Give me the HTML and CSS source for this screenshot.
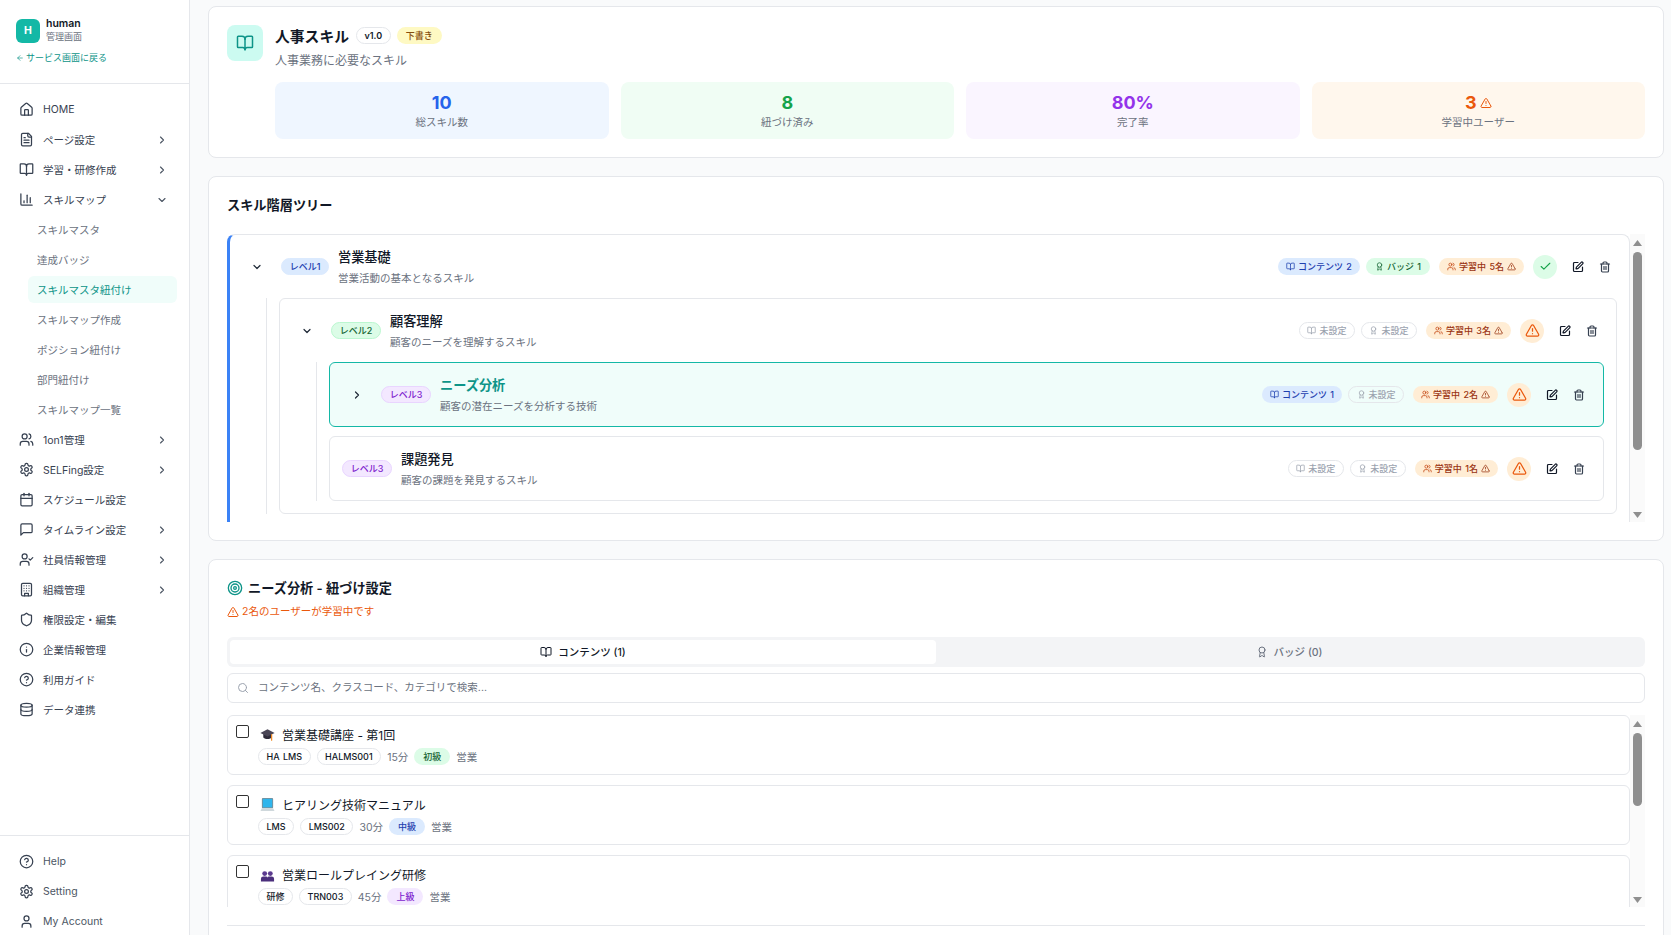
FILE: index.html
```html
<!DOCTYPE html>
<html lang="ja">
<head>
  <meta charset="UTF-8" />
  <title>スキルマスタ紐付け</title>
  <link rel="stylesheet" href="styles.css">
</head>
<body>
  <svg class="sprite" xmlns="http://www.w3.org/2000/svg">
    <symbol id="i-home" viewBox="0 0 24 24"><path d="M15 21v-8a1 1 0 0 0-1-1h-4a1 1 0 0 0-1 1v8"/><path d="M3 10a2 2 0 0 1 .709-1.528l7-5.999a2 2 0 0 1 2.582 0l7 5.999A2 2 0 0 1 21 10v9a2 2 0 0 1-2 2H5a2 2 0 0 1-2-2z"/></symbol>
    <symbol id="i-file" viewBox="0 0 24 24"><path d="M15 2H6a2 2 0 0 0-2 2v16a2 2 0 0 0 2 2h12a2 2 0 0 0 2-2V7Z"/><path d="M14 2v4a2 2 0 0 0 2 2h4"/><path d="M10 9H8"/><path d="M16 13H8"/><path d="M16 17H8"/></symbol>
    <symbol id="i-book" viewBox="0 0 24 24"><path d="M12 7v14"/><path d="M3 18a1 1 0 0 1-1-1V4a1 1 0 0 1 1-1h5a4 4 0 0 1 4 4 4 4 0 0 1 4-4h5a1 1 0 0 1 1 1v13a1 1 0 0 1-1 1h-6a3 3 0 0 0-3 3 3 3 0 0 0-3-3z"/></symbol>
    <symbol id="i-chart" viewBox="0 0 24 24"><path d="M3 3v16a2 2 0 0 0 2 2h16"/><path d="M18 17V9"/><path d="M13 17V5"/><path d="M8 17v-3"/></symbol>
    <symbol id="i-users" viewBox="0 0 24 24"><path d="M16 21v-2a4 4 0 0 0-4-4H6a4 4 0 0 0-4 4v2"/><path d="M16 3.128a4 4 0 0 1 0 7.744"/><path d="M22 21v-2a4 4 0 0 0-3-3.87"/><circle cx="9" cy="7" r="4"/></symbol>
    <symbol id="i-gear" viewBox="0 0 24 24"><path d="M12.22 2h-.44a2 2 0 0 0-2 2v.18a2 2 0 0 1-1 1.73l-.43.25a2 2 0 0 1-2 0l-.15-.08a2 2 0 0 0-2.73.73l-.22.38a2 2 0 0 0 .73 2.73l.15.1a2 2 0 0 1 1 1.72v.51a2 2 0 0 1-1 1.74l-.15.09a2 2 0 0 0-.73 2.73l.22.38a2 2 0 0 0 2.73.73l.15-.08a2 2 0 0 1 2 0l.43.25a2 2 0 0 1 1 1.73V20a2 2 0 0 0 2 2h.44a2 2 0 0 0 2-2v-.18a2 2 0 0 1 1-1.73l.43-.25a2 2 0 0 1 2 0l.15.08a2 2 0 0 0 2.73-.73l.22-.39a2 2 0 0 0-.73-2.73l-.15-.08a2 2 0 0 1-1-1.74v-.5a2 2 0 0 1 1-1.74l.15-.09a2 2 0 0 0 .73-2.73l-.22-.38a2 2 0 0 0-2.73-.73l-.15.08a2 2 0 0 1-2 0l-.43-.25a2 2 0 0 1-1-1.73V4a2 2 0 0 0-2-2z"/><circle cx="12" cy="12" r="3"/></symbol>
    <symbol id="i-calendar" viewBox="0 0 24 24"><path d="M8 2v4"/><path d="M16 2v4"/><rect width="18" height="18" x="3" y="4" rx="2"/><path d="M3 10h18"/></symbol>
    <symbol id="i-message" viewBox="0 0 24 24"><path d="M21 15a2 2 0 0 1-2 2H7l-4 4V5a2 2 0 0 1 2-2h14a2 2 0 0 1 2 2z"/></symbol>
    <symbol id="i-usercheck" viewBox="0 0 24 24"><path d="M16 21v-2a4 4 0 0 0-4-4H6a4 4 0 0 0-4 4v2"/><circle cx="9" cy="7" r="4"/><polyline points="16 11 18 13 22 9"/></symbol>
    <symbol id="i-building" viewBox="0 0 24 24"><rect width="16" height="20" x="4" y="2" rx="2"/><path d="M9 22v-4h6v4"/><path d="M8 6h.01"/><path d="M16 6h.01"/><path d="M12 6h.01"/><path d="M12 10h.01"/><path d="M12 14h.01"/><path d="M16 10h.01"/><path d="M16 14h.01"/><path d="M8 10h.01"/><path d="M8 14h.01"/></symbol>
    <symbol id="i-shield" viewBox="0 0 24 24"><path d="M20 13c0 5-3.5 7.5-7.66 8.95a1 1 0 0 1-.67-.01C7.5 20.5 4 18 4 13V6a1 1 0 0 1 1-1c2 0 4.5-1.2 6.24-2.72a1.17 1.17 0 0 1 1.52 0C14.51 3.81 17 5 19 5a1 1 0 0 1 1 1z"/></symbol>
    <symbol id="i-info" viewBox="0 0 24 24"><circle cx="12" cy="12" r="10"/><path d="M12 16v-4"/><path d="M12 8h.01"/></symbol>
    <symbol id="i-help" viewBox="0 0 24 24"><circle cx="12" cy="12" r="10"/><path d="M9.09 9a3 3 0 0 1 5.83 1c0 2-3 3-3 3"/><path d="M12 17h.01"/></symbol>
    <symbol id="i-database" viewBox="0 0 24 24"><ellipse cx="12" cy="5" rx="9" ry="3"/><path d="M3 5V19A9 3 0 0 0 21 19V5"/><path d="M3 12A9 3 0 0 0 21 12"/></symbol>
    <symbol id="i-user" viewBox="0 0 24 24"><path d="M19 21v-2a4 4 0 0 0-4-4H9a4 4 0 0 0-4 4v2"/><circle cx="12" cy="7" r="4"/></symbol>
    <symbol id="i-right" viewBox="0 0 24 24"><path d="m9 18 6-6-6-6"/></symbol>
    <symbol id="i-down" viewBox="0 0 24 24"><path d="m6 9 6 6 6-6"/></symbol>
    <symbol id="i-award" viewBox="0 0 24 24"><path d="m15.477 12.89 1.515 8.526a.5.5 0 0 1-.81.47l-3.58-2.687a1 1 0 0 0-1.197 0l-3.586 2.686a.5.5 0 0 1-.81-.469l1.514-8.526"/><circle cx="12" cy="8" r="6"/></symbol>
    <symbol id="i-alert" viewBox="0 0 24 24"><path d="m21.73 18-8-14a2 2 0 0 0-3.48 0l-8 14A2 2 0 0 0 4 21h16a2 2 0 0 0 1.73-3"/><path d="M12 9v4"/><path d="M12 17h.01"/></symbol>
    <symbol id="i-check" viewBox="0 0 24 24"><path d="M20 6 9 17l-5-5"/></symbol>
    <symbol id="i-edit" viewBox="0 0 24 24"><path d="M12 3H5a2 2 0 0 0-2 2v14a2 2 0 0 0 2 2h14a2 2 0 0 0 2-2v-7"/><path d="M18.375 2.625a1 1 0 0 1 3 3l-9.013 9.014a2 2 0 0 1-.853.505l-2.873.84a.5.5 0 0 1-.62-.62l.84-2.873a2 2 0 0 1 .506-.852z"/></symbol>
    <symbol id="i-trash" viewBox="0 0 24 24"><path d="M3 6h18"/><path d="M19 6v14c0 1-1 2-2 2H7c-1 0-2-1-2-2V6"/><path d="M8 6V4c0-1 1-2 2-2h4c1 0 2 1 2 2v2"/><line x1="10" x2="10" y1="11" y2="17"/><line x1="14" x2="14" y1="11" y2="17"/></symbol>
    <symbol id="i-target" viewBox="0 0 24 24"><circle cx="12" cy="12" r="10"/><circle cx="12" cy="12" r="6"/><circle cx="12" cy="12" r="2"/></symbol>
    <symbol id="i-search" viewBox="0 0 24 24"><circle cx="11" cy="11" r="8"/><path d="m21 21-4.3-4.3"/></symbol>
    <symbol id="i-back" viewBox="0 0 24 24"><path d="m12 19-7-7 7-7"/><path d="M19 12H5"/></symbol>
  </svg>

  <div class="app">
    <aside class="sidebar">
      <div class="side-head">
        <div class="brand">
          <div class="brand-logo">H</div>
          <div>
            <div class="brand-name">human</div>
            <div class="brand-sub">管理画面</div>
          </div>
        </div>
        <a class="back-link"><svg class="back-icon"><use href="#i-back"/></svg>サービス画面に戻る</a>
      </div>

      <nav class="nav">
        <a class="nav-item"><svg class="nav-icon"><use href="#i-home"/></svg><span class="nav-label">HOME</span></a>
        <a class="nav-item"><svg class="nav-icon"><use href="#i-file"/></svg><span class="nav-label">ページ設定</span><svg class="nav-caret"><use href="#i-right"/></svg></a>
        <a class="nav-item"><svg class="nav-icon"><use href="#i-book"/></svg><span class="nav-label">学習・研修作成</span><svg class="nav-caret"><use href="#i-right"/></svg></a>
        <a class="nav-item"><svg class="nav-icon"><use href="#i-chart"/></svg><span class="nav-label">スキルマップ</span><svg class="nav-caret"><use href="#i-down"/></svg></a>
        <div class="sub-nav">
          <a class="sub-item">スキルマスタ</a>
          <a class="sub-item">達成バッジ</a>
          <a class="sub-item sub-active">スキルマスタ紐付け</a>
          <a class="sub-item">スキルマップ作成</a>
          <a class="sub-item">ポジション紐付け</a>
          <a class="sub-item">部門紐付け</a>
          <a class="sub-item">スキルマップ一覧</a>
        </div>
        <a class="nav-item"><svg class="nav-icon"><use href="#i-users"/></svg><span class="nav-label">1on1管理</span><svg class="nav-caret"><use href="#i-right"/></svg></a>
        <a class="nav-item"><svg class="nav-icon"><use href="#i-gear"/></svg><span class="nav-label">SELFing設定</span><svg class="nav-caret"><use href="#i-right"/></svg></a>
        <a class="nav-item"><svg class="nav-icon"><use href="#i-calendar"/></svg><span class="nav-label">スケジュール設定</span></a>
        <a class="nav-item"><svg class="nav-icon"><use href="#i-message"/></svg><span class="nav-label">タイムライン設定</span><svg class="nav-caret"><use href="#i-right"/></svg></a>
        <a class="nav-item"><svg class="nav-icon"><use href="#i-usercheck"/></svg><span class="nav-label">社員情報管理</span><svg class="nav-caret"><use href="#i-right"/></svg></a>
        <a class="nav-item"><svg class="nav-icon"><use href="#i-building"/></svg><span class="nav-label">組織管理</span><svg class="nav-caret"><use href="#i-right"/></svg></a>
        <a class="nav-item"><svg class="nav-icon"><use href="#i-shield"/></svg><span class="nav-label">権限設定・編集</span></a>
        <a class="nav-item"><svg class="nav-icon"><use href="#i-info"/></svg><span class="nav-label">企業情報管理</span></a>
        <a class="nav-item"><svg class="nav-icon"><use href="#i-help"/></svg><span class="nav-label">利用ガイド</span></a>
        <a class="nav-item"><svg class="nav-icon"><use href="#i-database"/></svg><span class="nav-label">データ連携</span></a>
      </nav>

      <div class="side-foot">
        <a class="nav-item"><svg class="nav-icon"><use href="#i-help"/></svg><span class="nav-label">Help</span></a>
        <a class="nav-item"><svg class="nav-icon"><use href="#i-gear"/></svg><span class="nav-label">Setting</span></a>
        <a class="nav-item"><svg class="nav-icon"><use href="#i-user"/></svg><span class="nav-label">My Account</span></a>
      </div>
    </aside>

    <main class="main">
      <section class="card head-card">
        <div class="head-icon"><svg><use href="#i-book"/></svg></div>
        <div class="head-body">
          <div class="head-title">
            <h1>人事スキル</h1>
            <span class="chip chip-version">v1.0</span>
            <span class="chip chip-draft">下書き</span>
          </div>
          <p class="head-desc">人事業務に必要なスキル</p>
          <div class="stats">
            <div class="stat stat-blue"><div class="stat-num">10</div><div class="stat-label">総スキル数</div></div>
            <div class="stat stat-green"><div class="stat-num">8</div><div class="stat-label">紐づけ済み</div></div>
            <div class="stat stat-purple"><div class="stat-num">80%</div><div class="stat-label">完了率</div></div>
            <div class="stat stat-orange"><div class="stat-num">3<svg><use href="#i-alert"/></svg></div><div class="stat-label">学習中ユーザー</div></div>
          </div>
        </div>
      </section>

      <section class="card tree-card">
        <h2 class="section-title">スキル階層ツリー</h2>
        <div class="scroll-wrap tree-wrap">
          <div class="scroll-body">
            <div class="node node-root">
              <div class="row">
                <button class="toggle"><svg><use href="#i-down"/></svg></button>
                <span class="pill pill-l1">レベル1</span>
                <div class="row-text">
                  <div class="row-title">営業基礎</div>
                  <div class="row-desc">営業活動の基本となるスキル</div>
                </div>
                <div class="row-meta">
                  <span class="chip chip-blue"><svg><use href="#i-book"/></svg>コンテンツ 2</span>
                  <span class="chip chip-green"><svg><use href="#i-award"/></svg>バッジ 1</span>
                  <span class="chip chip-orange"><svg><use href="#i-users"/></svg>学習中 5名<svg><use href="#i-alert"/></svg></span>
                  <span class="status status-ok"><svg><use href="#i-check"/></svg></span>
                  <div class="actions">
                    <button class="act"><svg><use href="#i-edit"/></svg></button>
                    <button class="act act-del"><svg><use href="#i-trash"/></svg></button>
                  </div>
                </div>
              </div>
              <div class="children">
                <div class="node">
                  <div class="row">
                    <button class="toggle"><svg><use href="#i-down"/></svg></button>
                    <span class="pill pill-l2">レベル2</span>
                    <div class="row-text">
                      <div class="row-title">顧客理解</div>
                      <div class="row-desc">顧客のニーズを理解するスキル</div>
                    </div>
                    <div class="row-meta">
                      <span class="chip chip-none"><svg><use href="#i-book"/></svg>未設定</span>
                      <span class="chip chip-none"><svg><use href="#i-award"/></svg>未設定</span>
                      <span class="chip chip-orange"><svg><use href="#i-users"/></svg>学習中 3名<svg><use href="#i-alert"/></svg></span>
                      <span class="status status-warn"><svg><use href="#i-alert"/></svg></span>
                      <div class="actions">
                        <button class="act"><svg><use href="#i-edit"/></svg></button>
                        <button class="act act-del"><svg><use href="#i-trash"/></svg></button>
                      </div>
                    </div>
                  </div>
                  <div class="children children-last">
                    <div class="node node-active">
                      <div class="row">
                        <button class="toggle"><svg><use href="#i-right"/></svg></button>
                        <span class="pill pill-l3">レベル3</span>
                        <div class="row-text">
                          <div class="row-title">ニーズ分析</div>
                          <div class="row-desc">顧客の潜在ニーズを分析する技術</div>
                        </div>
                        <div class="row-meta">
                          <span class="chip chip-blue"><svg><use href="#i-book"/></svg>コンテンツ 1</span>
                          <span class="chip chip-none"><svg><use href="#i-award"/></svg>未設定</span>
                          <span class="chip chip-orange"><svg><use href="#i-users"/></svg>学習中 2名<svg><use href="#i-alert"/></svg></span>
                          <span class="status status-warn"><svg><use href="#i-alert"/></svg></span>
                          <div class="actions">
                            <button class="act"><svg><use href="#i-edit"/></svg></button>
                            <button class="act act-del"><svg><use href="#i-trash"/></svg></button>
                          </div>
                        </div>
                      </div>
                    </div>
                    <div class="node">
                      <div class="row">
                        <span class="pill pill-l3">レベル3</span>
                        <div class="row-text">
                          <div class="row-title">課題発見</div>
                          <div class="row-desc">顧客の課題を発見するスキル</div>
                        </div>
                        <div class="row-meta">
                          <span class="chip chip-none"><svg><use href="#i-book"/></svg>未設定</span>
                          <span class="chip chip-none"><svg><use href="#i-award"/></svg>未設定</span>
                          <span class="chip chip-orange"><svg><use href="#i-users"/></svg>学習中 1名<svg><use href="#i-alert"/></svg></span>
                          <span class="status status-warn"><svg><use href="#i-alert"/></svg></span>
                          <div class="actions">
                            <button class="act"><svg><use href="#i-edit"/></svg></button>
                            <button class="act act-del"><svg><use href="#i-trash"/></svg></button>
                          </div>
                        </div>
                      </div>
                    </div>
                  </div>
                </div>
              </div>
            </div>
          </div>
          <div class="scrollbar">
            <span class="sb-up"></span>
            <div class="sb-track"><span class="sb-thumb sb-thumb-tree"></span></div>
            <span class="sb-down"></span>
          </div>
        </div>
      </section>

      <section class="card link-card">
        <h2 class="section-title link-title"><svg><use href="#i-target"/></svg>ニーズ分析 - 紐づけ設定</h2>
        <p class="link-warn"><svg><use href="#i-alert"/></svg>2名のユーザーが学習中です</p>
        <div class="tabs">
          <button class="tab tab-active"><svg><use href="#i-book"/></svg>コンテンツ (1)</button>
          <button class="tab"><svg><use href="#i-award"/></svg>バッジ (0)</button>
        </div>
        <div class="search">
          <svg><use href="#i-search"/></svg>
          <input class="search-input" type="text" placeholder="コンテンツ名、クラスコード、カテゴリで検索..." />
        </div>
        <div class="scroll-wrap list-wrap">
          <div class="scroll-body item-list">
            <div class="item">
              <span class="check"></span>
              <div class="item-main">
                <div class="item-title">
                  <svg class="emoji" viewBox="0 0 16 16"><path d="M3.5 7.5v3.6c2.6 2.4 6.4 2.4 9 0V7.5z" fill="#2e2b3a"/><path d="M8 2.5 .4 6.3 8 10l7.6-3.7z" fill="#4a4656"/><path d="M12.4 8v6" stroke="#f08a24" stroke-width="1.3" fill="none"/></svg>
                  <span>営業基礎講座 - 第1回</span>
                </div>
                <div class="item-tags">
                  <span class="chip chip-tag">HA LMS</span>
                  <span class="chip chip-tag">HALMS001</span>
                  <span class="item-text">15分</span>
                  <span class="chip chip-easy">初級</span>
                  <span class="item-text">営業</span>
                </div>
              </div>
            </div>
            <div class="item">
              <span class="check"></span>
              <div class="item-main">
                <div class="item-title">
                  <svg class="emoji" viewBox="0 0 16 16"><rect x="2" y="1" width="12" height="11" rx="1" fill="#78909c"/><rect x="3" y="2" width="10" height="9" fill="#2fb5ec"/><path d="M2 12h12l1.5 3H.5z" fill="#cfd8dc"/></svg>
                  <span>ヒアリング技術マニュアル</span>
                </div>
                <div class="item-tags">
                  <span class="chip chip-tag">LMS</span>
                  <span class="chip chip-tag">LMS002</span>
                  <span class="item-text">30分</span>
                  <span class="chip chip-mid">中級</span>
                  <span class="item-text">営業</span>
                </div>
              </div>
            </div>
            <div class="item">
              <span class="check"></span>
              <div class="item-main">
                <div class="item-title">
                  <svg class="emoji" viewBox="0 0 16 16"><circle cx="5" cy="7" r="2.6" fill="#5b3a8f"/><circle cx="11" cy="7" r="2.6" fill="#5b3a8f"/><path d="M1 15.5v-3A2.5 2.5 0 0 1 3.5 10h3A1.5 1.5 0 0 1 8 11.500 1.500 1.500 0 0 1 9.500 10h3a2.500 2.500 0 0 1 2.500 2.500v3z" fill="#4b2f7c"/></svg>
                  <span>営業ロールプレイング研修</span>
                </div>
                <div class="item-tags">
                  <span class="chip chip-tag">研修</span>
                  <span class="chip chip-tag">TRN003</span>
                  <span class="item-text">45分</span>
                  <span class="chip chip-hard">上級</span>
                  <span class="item-text">営業</span>
                </div>
              </div>
            </div>
          </div>
          <div class="scrollbar">
            <span class="sb-up"></span>
            <div class="sb-track"><span class="sb-thumb sb-thumb-list"></span></div>
            <span class="sb-down"></span>
          </div>
        </div>
        <div class="link-foot"></div>
      </section>
    </main>
  </div>
</body>
</html>
```

FILE: styles.css
```css
html, body {
  height: 100%;
  margin: 0;
  overflow: hidden;
  font-family: "Inter", "Noto Sans CJK JP", sans-serif;
  color: #111827;
  background: #f9fafb;
}

* {
  box-sizing: border-box;
}

svg {
  fill: none;
  stroke: currentColor;
  stroke-width: 2;
  stroke-linecap: round;
  stroke-linejoin: round;
  flex-shrink: 0;
}

button {
  font-family: inherit;
  border: none;
  background: none;
  padding: 0;
  color: inherit;
}

h1, h2, p {
  margin: 0;
}

.sprite {
  display: none;
}

.app {
  display: flex;
  height: 100vh;
}

/* sidebar */
.sidebar {
  width: 190px;
  flex-shrink: 0;
  display: flex;
  flex-direction: column;
  background: #fff;
  border-right: 1px solid #e5e7eb;
}

.side-head {
  height: 84px;
  padding: 18px 16px 0;
  border-bottom: 1px solid #e5e7eb;
}

.brand {
  display: flex;
  align-items: center;
  gap: 6px;
}

.brand-logo {
  width: 24px;
  height: 24px;
  border-radius: 6px;
  background: #14b8a6;
  color: #fff;
  font-size: 10.5px;
  font-weight: 700;
  display: flex;
  align-items: center;
  justify-content: center;
}

.brand-name {
  font-size: 10.5px;
  font-weight: 600;
  line-height: 12px;
  margin-bottom: 1px;
  color: #111827;
}

.brand-sub {
  font-size: 9px;
  line-height: 12px;
  color: #6b7280;
}

.back-link {
  display: flex;
  align-items: center;
  gap: 2px;
  margin-top: 9px;
  font-size: 9px;
  line-height: 12px;
  color: #0d9488;
}

.back-icon {
  width: 8px;
  height: 8px;
}

.nav {
  flex: 1;
  padding: 10.5px 12px 0;
}

.nav-item {
  display: flex;
  align-items: center;
  height: 30px;
  padding: 0 9px 0 7px;
  gap: 9px;
  font-size: 10.5px;
  color: #374151;
}

.nav-icon {
  width: 15px;
  height: 15px;
}

.nav-label {
  flex: 1;
}

.nav-caret {
  width: 12px;
  height: 12px;
  stroke-width: 2.2;
  color: #4b5563;
}

.sub-nav {
  display: flex;
  flex-direction: column;
  gap: 3px;
  padding: 1.5px 0;
  margin-left: 16px;
}

.sub-item {
  display: flex;
  align-items: center;
  height: 27px;
  padding: 0 9px;
  border-radius: 6px;
  font-size: 10.5px;
  color: #6b7280;
}

.sub-active {
  background: #f0fdfa;
  color: #0d9488;
}

.side-foot {
  height: 100px;
  padding: 10px 12px 0;
  border-top: 1px solid #e5e7eb;
}

.side-foot .nav-label {
  color: #4b5563;
}

/* main */
.main {
  flex: 1;
  min-width: 0;
  height: 100vh;
  overflow: hidden;
  padding: 6px 7px 0 18px;
  display: flex;
  flex-direction: column;
  gap: 18px;
}

.card {
  flex-shrink: 0;
  background: #fff;
  border: 1px solid #e5e7eb;
  border-radius: 8px;
  padding: 18px;
}

.head-card {
  display: flex;
  gap: 12px;
}

.head-icon {
  width: 36px;
  height: 36px;
  border-radius: 8px;
  background: #ccfbf1;
  color: #0d9488;
  display: flex;
  align-items: center;
  justify-content: center;
  flex-shrink: 0;
}

.head-icon svg {
  width: 18px;
  height: 18px;
}

.head-body {
  flex: 1;
  min-width: 0;
}

.head-title {
  display: flex;
  align-items: center;
  gap: 6px;
  height: 20px;
}

.head-title h1 {
  font-size: 14.8px;
  font-weight: 700;
  margin-right: 1px;
}

.head-desc {
  margin-top: 7px;
  font-size: 12px;
  line-height: 18px;
  color: #6b7280;
}

.stats {
  display: grid;
  grid-template-columns: repeat(4, 1fr);
  gap: 12px;
  margin-top: 12px;
}

.stat {
  height: 57px;
  padding-top: 1px;
  border-radius: 8px;
  display: flex;
  flex-direction: column;
  align-items: center;
  justify-content: center;
}

.stat-num {
  display: flex;
  align-items: center;
  gap: 3px;
  font-size: 18px;
  line-height: 22px;
  font-weight: 700;
}

.stat-num svg {
  width: 12px;
  height: 12px;
}

.stat-label {
  margin-top: 2px;
  font-size: 10.5px;
  line-height: 14px;
  color: #6b7280;
}

.stat-blue { background: #eff6ff; }
.stat-blue .stat-num { color: #2563eb; }
.stat-green { background: #f0fdf4; }
.stat-green .stat-num { color: #16a34a; }
.stat-purple { background: #faf5ff; }
.stat-purple .stat-num { color: #9333ea; }
.stat-orange { background: #fff7ed; }
.stat-orange .stat-num { color: #ea580c; }

.section-title {
  font-size: 13.2px;
  line-height: 20px;
  font-weight: 600;
  color: #111827;
}

/* fake classic scrollbars, the boxes behind them are clipped */
.scroll-wrap {
  display: flex;
}

.scroll-body {
  flex: 1;
  min-width: 0;
  overflow: hidden;
}

.scrollbar {
  width: 15px;
  flex-shrink: 0;
  background: #fafafa;
  display: flex;
  flex-direction: column;
  align-items: center;
}

.sb-up, .sb-down {
  flex-shrink: 0;
  width: 9px;
  height: 6px;
  background: #8f8f8f;
}

.sb-up {
  margin-top: 6px;
  clip-path: polygon(50% 0, 100% 100%, 0 100%);
}

.sb-down {
  margin-bottom: 4px;
  clip-path: polygon(0 0, 100% 0, 50% 100%);
}

.sb-track {
  flex: 1;
  width: 100%;
  display: flex;
  justify-content: center;
  padding-top: 6px;
}

.sb-thumb {
  display: block;
  width: 9px;
  border-radius: 5px;
  background: #8f8f8f;
}

.sb-thumb-tree { height: 198px; }
.sb-thumb-list { height: 73px; }

/* tree */
.tree-wrap {
  height: 288px;
  margin-top: 19px;
}

.node {
  background: #fff;
  border: 1px solid #e5e7eb;
  border-radius: 6px;
}

.node-root {
  border-left: 3px solid #3b82f6;
  border-radius: 8px 8px 0 0;
  border-bottom: none;
  padding-bottom: 40px;
}

.node-active {
  background: #f0fdfa;
  border-color: #14b8a6;
}

.row {
  display: flex;
  align-items: center;
  gap: 9px;
  height: 63px;
  padding: 0 12px;
}

.toggle {
  width: 30px;
  height: 24px;
  display: flex;
  align-items: center;
  justify-content: center;
  color: #1f2937;
}

.toggle svg {
  width: 12px;
  height: 12px;
  stroke-width: 2.4;
}

.pill {
  flex-shrink: 0;
  display: inline-flex;
  align-items: center;
  justify-content: center;
  height: 17px;
  border-radius: 999px;
  font-size: 9px;
  font-weight: 500;
  white-space: nowrap;
  border: 1px solid transparent;
}

.pill-l1 { background: #dbeafe; border-color: #dbeafe; color: #1e40af; width: 48px; }
.pill-l2 { background: #dcfce7; border-color: #bbf7d0; color: #166534; width: 50px; }
.pill-l3 { background: #f3e8ff; border-color: #e9d5ff; color: #7e22ce; width: 50px; }

.row-text {
  flex: 1;
  min-width: 0;
  padding-top: 1px;
}

.row-title {
  font-size: 13.2px;
  line-height: 20px;
  font-weight: 500;
  color: #111827;
}

.node-active .row-title {
  color: #0d9488;
  font-weight: 600;
}

.row-desc {
  margin-top: 3px;
  font-size: 10.5px;
  line-height: 18px;
  color: #6b7280;
}

.row-meta {
  display: flex;
  align-items: center;
  gap: 9px;
}

.chip {
  display: inline-flex;
  align-items: center;
  height: 17px;
  padding: 0 8px;
  gap: 3px;
  border-radius: 999px;
  border: 1px solid transparent;
  font-size: 9px;
  font-weight: 500;
  word-spacing: 1px;
  white-space: nowrap;
}

.chip svg {
  width: 9px;
  height: 9px;
}

.chip-version { border-color: #e5e7eb; color: #111827; font-weight: 600; padding: 0 7.5px; }
.chip-draft { background: #fef9c3; color: #854d0e; }
.chip-blue { background: #dbeafe; color: #1e40af; margin-right: -3px; padding: 0 7px; }
.chip-green { background: #dcfce7; color: #166534; }
.chip-orange { background: #ffedd5; color: #9a3412; padding: 0 7px; }
.chip-none { border-color: #e5e7eb; color: #9ca3af; margin-right: -3px; padding: 0 7.5px; }
.chip-none + .chip-orange { margin-left: 3px; }
.chip-tag { border-color: #e5e7eb; color: #111827; padding: 0 7.5px; }
.chip-easy { background: #dcfce7; color: #166534; }
.chip-mid { background: #dbeafe; color: #1e40af; }
.chip-hard { background: #f3e8ff; color: #7e22ce; }

.chip-orange svg:first-child {
  color: #c2410c;
}

.status {
  width: 24px;
  height: 24px;
  border-radius: 50%;
  display: flex;
  align-items: center;
  justify-content: center;
}

.status-ok {
  background: #dcfce7;
  color: #16a34a;
}

.status-ok svg {
  width: 13px;
  height: 13px;
}

.status-warn {
  background: #ffedd5;
  color: #ea580c;
}

.status-warn svg {
  width: 15px;
  height: 15px;
}

.actions {
  display: flex;
  gap: 3px;
}

.act {
  width: 24px;
  height: 24px;
  display: flex;
  align-items: center;
  justify-content: center;
  color: #111827;
}

.act svg {
  width: 12px;
  height: 12px;
  stroke-width: 2.4;
}

.act-del {
  color: #374151;
}

.children {
  margin: 0 12px 0 36px;
  padding-left: 12px;
  border-left: 1px solid #e5e7eb;
  display: flex;
  flex-direction: column;
  gap: 9px;
}

.children-last {
  margin-bottom: 12px;
}

/* binding section */
.link-card {
  padding-bottom: 60px;
}

.link-title {
  display: flex;
  align-items: center;
  gap: 5px;
}

.link-title svg {
  width: 16px;
  height: 16px;
  color: #0d9488;
}

.link-warn {
  display: flex;
  align-items: center;
  gap: 3px;
  margin-top: 7px;
  font-size: 10.5px;
  line-height: 14px;
  color: #ea580c;
}

.link-warn svg {
  width: 12px;
  height: 12px;
}

.tabs {
  display: grid;
  grid-template-columns: 1fr 1fr;
  height: 30px;
  padding: 3px;
  margin-top: 18px;
  background: #f3f4f6;
  border-radius: 6px;
}

.tab {
  display: flex;
  align-items: center;
  justify-content: center;
  gap: 6px;
  padding-bottom: 1px;
  border-radius: 4px;
  font-size: 10.5px;
  font-weight: 500;
  color: #6b7280;
}

.tab svg {
  width: 12px;
  height: 12px;
}

.tab-active {
  background: #fff;
  color: #111827;
}

.search {
  display: flex;
  align-items: center;
  gap: 9px;
  height: 30px;
  margin-top: 6px;
  padding: 0 9px;
  background: #fff;
  border: 1px solid #e5e7eb;
  border-radius: 6px;
  color: #9ca3af;
}

.search svg {
  width: 12px;
  height: 12px;
}

.search-input {
  flex: 1;
  border: none;
  outline: none;
  padding: 0 0 2px;
  font-family: inherit;
  font-size: 10.5px;
  background: transparent;
}

.search-input::placeholder {
  color: #6b7280;
}

.list-wrap {
  height: 192px;
  margin-top: 12px;
}

.item-list {
  display: flex;
  flex-direction: column;
  gap: 10px;
}

.item {
  flex-shrink: 0;
  display: flex;
  gap: 9px;
  height: 60px;
  padding: 9px 9px 9px 8px;
  background: #fff;
  border: 1px solid #e5e7eb;
  border-radius: 6px;
}

.check {
  width: 13px;
  height: 13px;
  flex-shrink: 0;
  border: 1.5px solid #333;
  border-radius: 2px;
}

.item-title {
  display: flex;
  align-items: center;
  gap: 7px;
  height: 18px;
  font-size: 12px;
  color: #111827;
}

.emoji {
  width: 15px;
  height: 15px;
  stroke: none;
  margin-left: 2px;
}

.item-tags {
  display: flex;
  align-items: center;
  gap: 6px;
  margin-top: 5px;
}

.item-text {
  font-size: 10.5px;
  color: #6b7280;
}

.link-foot {
  margin-top: 18px;
  border-top: 1px solid #e5e7eb;
}
```
